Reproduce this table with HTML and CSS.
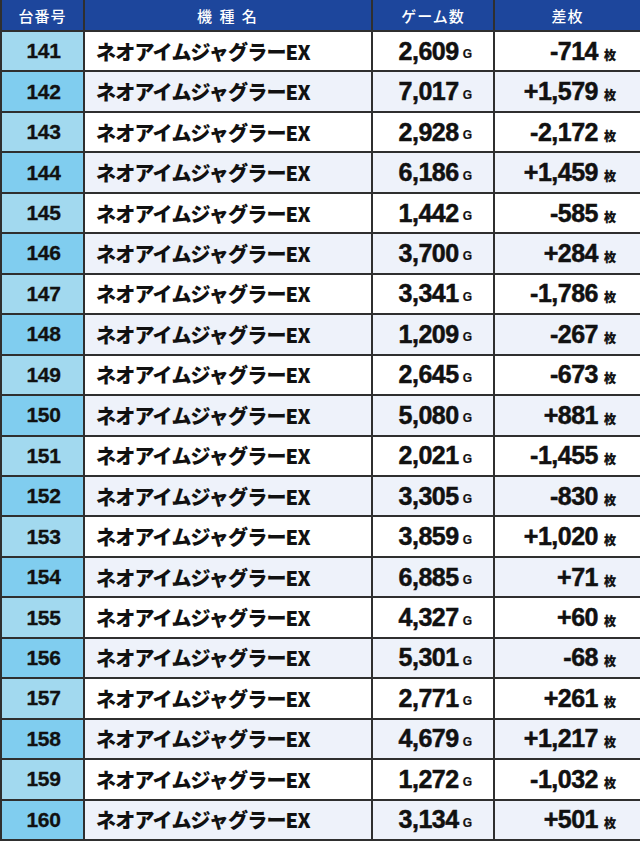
FILE: index.html
```html
<!DOCTYPE html>
<html lang="ja">
<head>
<meta charset="utf-8">
<title>ネオアイムジャグラーEX</title>
<link rel="stylesheet" href="styles.css">
</head>
<body>
<div class="tbl">
  <div class="row head">
    <div class="c">台番号</div>
    <div class="c name-h">機 種 名</div>
    <div class="c">ゲーム数</div>
    <div class="c">差枚</div>
  </div>
  <div class="row"><div class="no">141</div><div class="nm">ネオアイムジャグラーEX</div><div class="g">2,609<span>G</span></div><div class="d">-714<span>枚</span></div></div>
  <div class="row alt"><div class="no">142</div><div class="nm">ネオアイムジャグラーEX</div><div class="g">7,017<span>G</span></div><div class="d">+1,579<span>枚</span></div></div>
  <div class="row"><div class="no">143</div><div class="nm">ネオアイムジャグラーEX</div><div class="g">2,928<span>G</span></div><div class="d">-2,172<span>枚</span></div></div>
  <div class="row alt"><div class="no">144</div><div class="nm">ネオアイムジャグラーEX</div><div class="g">6,186<span>G</span></div><div class="d">+1,459<span>枚</span></div></div>
  <div class="row"><div class="no">145</div><div class="nm">ネオアイムジャグラーEX</div><div class="g">1,442<span>G</span></div><div class="d">-585<span>枚</span></div></div>
  <div class="row alt"><div class="no">146</div><div class="nm">ネオアイムジャグラーEX</div><div class="g">3,700<span>G</span></div><div class="d">+284<span>枚</span></div></div>
  <div class="row"><div class="no">147</div><div class="nm">ネオアイムジャグラーEX</div><div class="g">3,341<span>G</span></div><div class="d">-1,786<span>枚</span></div></div>
  <div class="row alt"><div class="no">148</div><div class="nm">ネオアイムジャグラーEX</div><div class="g">1,209<span>G</span></div><div class="d">-267<span>枚</span></div></div>
  <div class="row"><div class="no">149</div><div class="nm">ネオアイムジャグラーEX</div><div class="g">2,645<span>G</span></div><div class="d">-673<span>枚</span></div></div>
  <div class="row alt"><div class="no">150</div><div class="nm">ネオアイムジャグラーEX</div><div class="g">5,080<span>G</span></div><div class="d">+881<span>枚</span></div></div>
  <div class="row"><div class="no">151</div><div class="nm">ネオアイムジャグラーEX</div><div class="g">2,021<span>G</span></div><div class="d">-1,455<span>枚</span></div></div>
  <div class="row alt"><div class="no">152</div><div class="nm">ネオアイムジャグラーEX</div><div class="g">3,305<span>G</span></div><div class="d">-830<span>枚</span></div></div>
  <div class="row"><div class="no">153</div><div class="nm">ネオアイムジャグラーEX</div><div class="g">3,859<span>G</span></div><div class="d">+1,020<span>枚</span></div></div>
  <div class="row alt"><div class="no">154</div><div class="nm">ネオアイムジャグラーEX</div><div class="g">6,885<span>G</span></div><div class="d">+71<span>枚</span></div></div>
  <div class="row"><div class="no">155</div><div class="nm">ネオアイムジャグラーEX</div><div class="g">4,327<span>G</span></div><div class="d">+60<span>枚</span></div></div>
  <div class="row alt"><div class="no">156</div><div class="nm">ネオアイムジャグラーEX</div><div class="g">5,301<span>G</span></div><div class="d">-68<span>枚</span></div></div>
  <div class="row"><div class="no">157</div><div class="nm">ネオアイムジャグラーEX</div><div class="g">2,771<span>G</span></div><div class="d">+261<span>枚</span></div></div>
  <div class="row alt"><div class="no">158</div><div class="nm">ネオアイムジャグラーEX</div><div class="g">4,679<span>G</span></div><div class="d">+1,217<span>枚</span></div></div>
  <div class="row"><div class="no">159</div><div class="nm">ネオアイムジャグラーEX</div><div class="g">1,272<span>G</span></div><div class="d">-1,032<span>枚</span></div></div>
  <div class="row alt"><div class="no">160</div><div class="nm">ネオアイムジャグラーEX</div><div class="g">3,134<span>G</span></div><div class="d">+501<span>枚</span></div></div>
</div>
</body>
</html>
```
FILE: styles.css
```css
html, body {
  margin: 0;
  padding: 0;
  background: #ffffff;
}
.tbl {
  box-sizing: border-box;
  width: 640px;
  height: 841px;
  display: grid;
  grid-template-columns: 81px 286px 120px 1fr;
  grid-template-rows: 30px repeat(20, 1fr);
  gap: 2px;
  background: #2f2f2f;
  border-left: 2px solid #2f2f2f;
  border-bottom: 2px solid #2f2f2f;
  font-family: "Liberation Sans", "Noto Sans CJK JP", sans-serif;
  color: #111111;
}
.row {
  display: contents;
}
.row > div {
  display: flex;
  align-items: center;
  background: #ffffff;
}
.row.alt > div {
  background: #eef2fa;
}
.head > div.c {
  background: #1d469c;
  color: #ffffff;
  justify-content: center;
  font-family: "Noto Sans CJK JP", sans-serif;
  font-weight: 500;
  font-size: 15px;
  letter-spacing: 1px;
  padding-top: 1px;
}
.head > div.name-h {
  letter-spacing: 2px;
  white-space: pre;
}
.row > div.no {
  background: #a2d9ef;
  justify-content: center;
  font-weight: 700;
  font-size: 21px;
  letter-spacing: -0.3px;
  -webkit-text-stroke: 0.3px #111111;
  padding-left: 2px;
}
.row.alt > div.no {
  background: #80cdef;
}
.row > div.nm {
  font-family: "Noto Sans CJK JP", sans-serif;
  font-weight: 900;
  font-size: 20px;
  letter-spacing: -0.8px;
  padding-left: 11px;
}
.row > div.g,
.row > div.d {
  justify-content: flex-end;
  font-weight: 700;
  font-size: 25px;
  letter-spacing: -0.5px;
  -webkit-text-stroke: 0.5px #111111;
}
.row > div.g {
  padding-right: 21px;
}
.row > div.d {
  padding-right: 24px;
}
.g span,
.d span {
  font-size: 12px;
  letter-spacing: 0;
  -webkit-text-stroke: 0.2px #111111;
  align-self: center;
  padding-top: 6px;
}
.g span {
  margin-left: 4px;
}
.d span {
  font-family: "Noto Sans CJK JP", sans-serif;
  font-weight: 900;
  margin-left: 6px;
}
```
